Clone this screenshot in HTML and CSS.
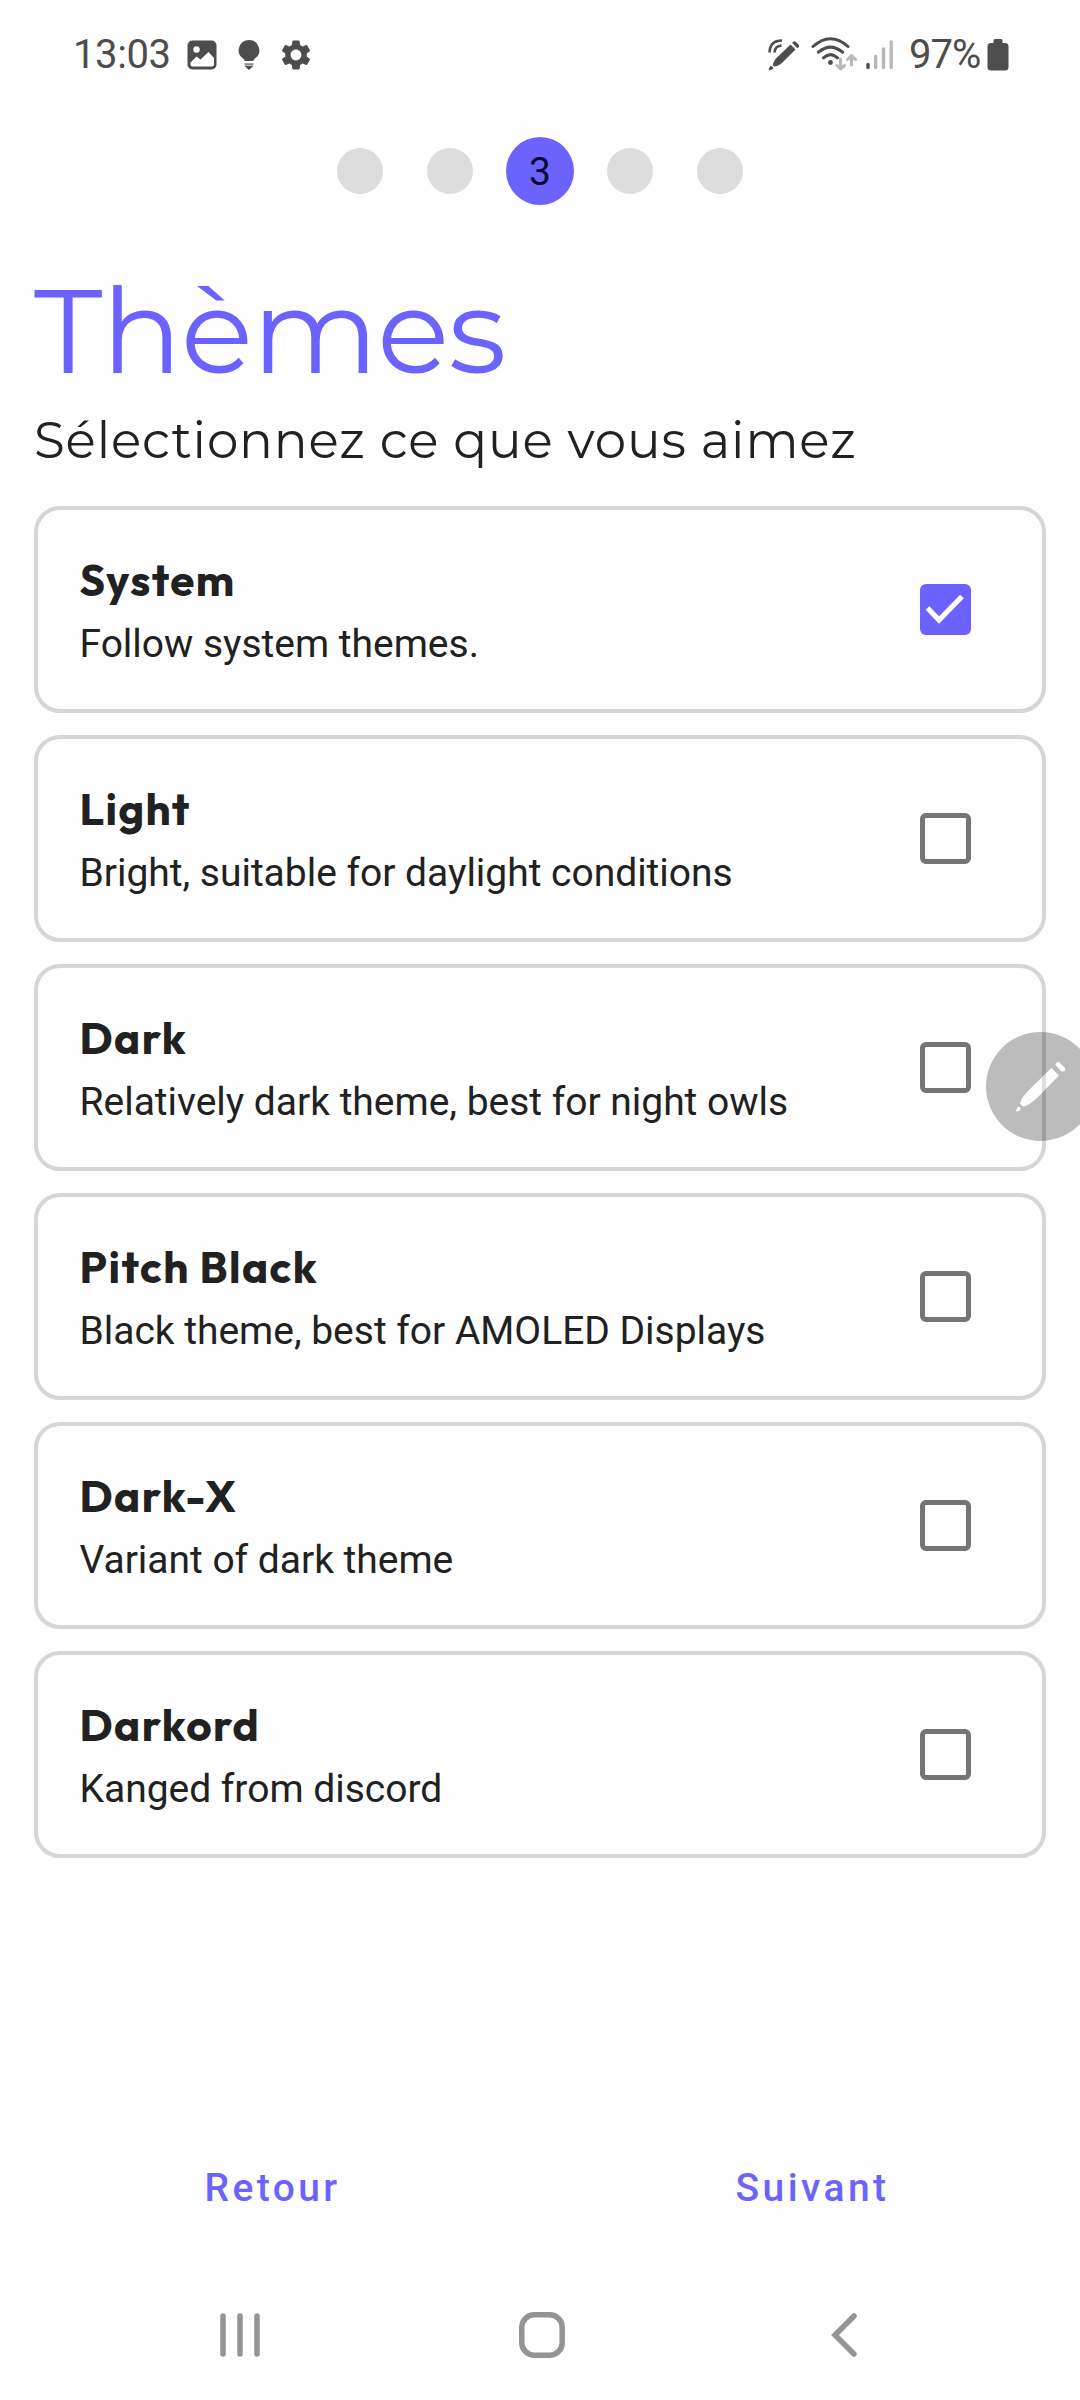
FILE: index.html
```html
<!DOCTYPE html>
<html lang="fr">
<head>
<meta charset="utf-8">
<title>Thèmes</title>
<link rel="stylesheet" href="styles.css">
</head>
<body>
<div class="screen">
  <header class="status">
    <span class="status-text clock">13:03</span>
    <svg class="ic-image" width="30" height="30" viewBox="0 0 30 30"><rect x=".5" y=".5" width="29" height="29" rx="5" fill="#4d4d4d"/><circle cx="9.500" cy="9.500" r="3.200" fill="#fff"/><path d="M3.500 22.500 L9.500 16.500 L13.500 19.500 L21.500 12 L27 18 V24.500 Q27 26.500 25 26.500 H5.500 Q3.500 26.500 3.500 24.500Z" fill="#fff"/></svg>
    <svg class="ic-bulb" width="22" height="32" viewBox="0 0 22 32"><path d="M11 1a10.200 10.200 0 0 0-6.500 18.100c1.100.9 1.800 1.700 2.200 2.900h8.600c.4-1.200 1.100-2 2.200-2.900A10.200 10.200 0 0 0 11 1ZM6.700 24.500h8.600v2.500l-4.300 4-4.300-4Z" fill="#4d4d4d"/><path d="M6 26.200h10" stroke="#fff" stroke-width="1"/></svg>
    <svg class="ic-gear" width="36" height="36" viewBox="0 0 24 24"><path fill="#4d4d4d" d="M19.140 12.940c.040-.3.060-.610.060-.940 0-.320-.020-.640-.070-.940l2.030-1.580c.180-.140.230-.410.120-.610l-1.920-3.320c-.120-.220-.370-.290-.590-.220l-2.390.960c-.5-.380-1.030-.7-1.620-.940l-.360-2.540c-.040-.240-.240-.410-.480-.410h-3.840c-.240 0-.430.170-.470.410l-.360 2.540c-.590.240-1.130.570-1.620.940l-2.390-.960c-.220-.080-.470 0-.590.220L2.740 8.870c-.120.210-.080.470.120.610l2.030 1.580c-.050.3-.090.630-.090.940s.020.640.070.940l-2.030 1.580c-.180.140-.230.410-.120.610l1.920 3.320c.120.220.370.290.590.220l2.390-.960c.5.380 1.030.7 1.620.940l.360 2.540c.050.240.240.410.480.410h3.840c.240 0 .440-.170.470-.410l.360-2.540c.590-.240 1.130-.560 1.620-.940l2.390.960c.220.080.470 0 .590-.220l1.920-3.320c.120-.220.070-.470-.120-.610l-2.010-1.580zM12 15.600c-1.980 0-3.600-1.620-3.600-3.600s1.620-3.600 3.600-3.600 3.600 1.620 3.600 3.600-1.620 3.600-3.600 3.600z"/></svg>
    <span class="spacer"></span>
    <svg class="ic-spen" width="32" height="32" viewBox="0 0 32 32"><g fill="#4d4d4d"><path d="M22.500 5.500 27.500 10.500 14.500 23.500Q10 27.500 6 27.500L4.800 26.300Q5 22.500 9 18.500Z"/><path d="M24 3.800Q26 1 28 3L30.500 5.500Q32 8 29.500 9.200Z"/><path d="M1 31 2.500 27.500Q5 27.500 5 29.500Z" stroke="#4d4d4d"/></g><g fill="none" stroke="#4d4d4d" stroke-width="2.600"><path d="M1.500 13.500Q2 1.500 14 1.500M6.500 13.500Q7 6.800 13.500 6.500"/></g></svg>
    <svg class="ic-wifi" width="48" height="35" viewBox="0 0 48 35"><g fill="none" stroke="#4d4d4d" stroke-width="3" stroke-linecap="round"><path d="M2 9.500Q19.500-6 37 9.500M7.500 15.200Q19.500 5 31.500 15.200M12.500 20.800Q19.500 14.500 26.500 20.800"/></g><circle cx="19.500" cy="25.500" r="2.400" fill="#4d4d4d"/><g fill="none" stroke="#b8b8b8" stroke-width="3" stroke-linecap="round" stroke-linejoin="round"><path d="M29.500 22V32M26 28.500 29.500 32 33.500 28.500M40.500 28V18.500M36.500 22.500 40.500 18.500 44.500 22.500"/></g></svg>
    <svg class="ic-signal" width="28" height="30" viewBox="0 0 28 30"><g fill="none" stroke="#b8b8b8" stroke-width="3.400" stroke-linecap="round"><path d="M9.700 16.500V27.500M17.500 9V27.500M25.200 2V27.500"/><path d="M2 24.500V27.500" stroke="#4d4d4d"/></g></svg>
    <span class="status-text percent">97%</span>
    <svg class="ic-battery" width="22" height="32" viewBox="0 0 22 32"><path d="M6.500 1.500Q6.500 0 8 0H14Q15.500 0 15.500 1.500V4H18Q21.500 4 21.500 7.500V28Q21.500 31.500 18 31.500H4Q.5 31.500 .5 28V7.500Q.5 4 4 4H6.500Z" fill="#4d4d4d"/></svg>
  </header>

  <div class="stepper">
    <span class="step"></span><span class="step"></span><span class="step active">3</span><span class="step"></span><span class="step"></span>
  </div>

  <main class="content">
    <h1 class="title">Thèmes</h1>
    <p class="subtitle">Sélectionnez ce que vous aimez</p>
    <div class="cards">
      <div class="card"><div class="info"><h2 class="name">System</h2><p class="desc">Follow system themes.</p></div><span class="check checked"><svg width="51" height="51" viewBox="0 0 51 51"><path d="M7.500 24 19 36 42 12.500" fill="none" stroke="#fff" stroke-width="5.200"/></svg></span></div>
      <div class="card"><div class="info"><h2 class="name">Light</h2><p class="desc">Bright, suitable for daylight conditions</p></div><span class="check"></span></div>
      <div class="card"><div class="info"><h2 class="name">Dark</h2><p class="desc">Relatively dark theme, best for night owls</p></div><span class="check"></span></div>
      <div class="card"><div class="info"><h2 class="name">Pitch Black</h2><p class="desc">Black theme, best for AMOLED Displays</p></div><span class="check"></span></div>
      <div class="card"><div class="info"><h2 class="name">Dark-X</h2><p class="desc">Variant of dark theme</p></div><span class="check"></span></div>
      <div class="card"><div class="info"><h2 class="name">Darkord</h2><p class="desc">Kanged from discord</p></div><span class="check"></span></div>
    </div>
  </main>

  <div class="actions">
    <span class="action">Retour</span>
    <span class="action">Suivant</span>
  </div>

  <nav class="navbar">
    <svg width="42" height="46" viewBox="0 0 42 46"><path d="M4 4V42M21 4V42M38 4V42" stroke="#949494" stroke-width="5.500" stroke-linecap="round"/></svg>
    <svg class="home" width="46" height="46" viewBox="0 0 46 46"><rect x="2.800" y="2.800" width="40.400" height="40.400" rx="12.500" fill="none" stroke="#949494" stroke-width="5.500"/></svg>
    <svg width="26" height="46" viewBox="0 0 26 46"><path d="M23 4 4 23 23 42" fill="none" stroke="#949494" stroke-width="5.500" stroke-linecap="round"/></svg>
  </nav>

  <div class="floating-pen">
    <svg width="109" height="109" viewBox="0 0 109 109"><g fill="#fff" fill-opacity=".98"><path d="M65.500 36 73 43.500 53 64Q43 74 37 74.500L34 71.500Q34.500 66 46 55Z"/><path d="M69.500 33Q69 30 73 30L79 36Q80 40 75.500 39.500Z"/><path d="M30 79 31 76Q33 73.500 34.500 76 34.500 79 31 79.500Z"/></g><path d="M56 45.500 60 41.500V57L56 61Z" fill="#000" fill-opacity=".12"/></svg>
  </div>
</div>
</body>
</html>
```
FILE: styles.css
```css
* { box-sizing: border-box; }
body { margin: 0; background: #fefefe; font-family: Roboto, sans-serif; color: #212121; }
h1, h2, p { margin: 0; }
svg { display: block; flex: none; }
.screen { position: relative; width: 1080px; height: 2400px; overflow: hidden; display: flex; flex-direction: column; }
.status, .stepper, .actions, .navbar { flex: none; }

.status { height: 109px; padding-left: 73px; padding-right: 71px; display: flex; align-items: center; color: #4d4d4d; }
.status-text { flex: none; font-size: 40px; line-height: 48px; white-space: nowrap; }
.clock { width: 114px; letter-spacing: -.4px; }
.percent { width: 78px; letter-spacing: -1px; }
.ic-bulb { margin-left: 21px; }
.ic-gear { margin-left: 18px; }
.spacer { flex: 1; }
.ic-wifi { margin-left: 11px; }
.ic-signal { margin-left: 7px; margin-right: 15px; }

.stepper { height: 124px; display: flex; justify-content: center; align-items: center; gap: 44px; }
.step { width: 46px; height: 46px; border-radius: 50%; background: #ddd; }
.step.active { width: 68px; height: 68px; margin: 0 -11px; background: #6c63ff; color: #0c0933; font-size: 39px; line-height: 70px; text-align: center; }

.content { flex: 1; padding: 41px 34px 0; }
.title { font-family: Montserrat, Inter, sans-serif; font-weight: 400; font-size: 119px; line-height: 114px; letter-spacing: -.9px; color: #6c63ff; }
.subtitle { margin-top: 23px; font-family: Montserrat, Inter, sans-serif; font-weight: 400; font-size: 50px; line-height: 60px; letter-spacing: .87px; white-space: nowrap; }
.cards { margin-top: 35px; display: grid; gap: 22px; }
.card { height: 207px; border: 4px solid #d6d6d6; border-radius: 26px; padding: 0 71.500px 0 41.500px; display: flex; align-items: center; justify-content: space-between; }
.name { font-family: Outfit, Inter, sans-serif; font-weight: 700; font-size: 44px; line-height: 52px; letter-spacing: 1.4px; }
.desc { margin-top: 15px; font-size: 39px; line-height: 46px; letter-spacing: -.02px; white-space: nowrap; }
.info { padding-top: 2px; }
.check { width: 51px; height: 51px; margin-top: -1px; border: 5.500px solid #757575; border-radius: 6px; flex: none; }
.checked { border: 0; background: #6c63ff; }

.actions { height: 165px; display: grid; grid-template-columns: 1fr 1fr; align-items: center; text-align: center; }
.action { padding-left: 5px; color: #6c63ff; font-size: 39px; font-weight: 500; line-height: 46px; letter-spacing: 3.400px; }

.navbar { height: 130px; display: flex; justify-content: space-between; align-items: center; padding: 0 223px 0 219px; }
.home { margin-right: 8px; }
.floating-pen { position: absolute; left: 986px; top: 1032px; width: 109px; height: 109px; border-radius: 50%; background: rgba(0, 0, 0, .26); }
```
